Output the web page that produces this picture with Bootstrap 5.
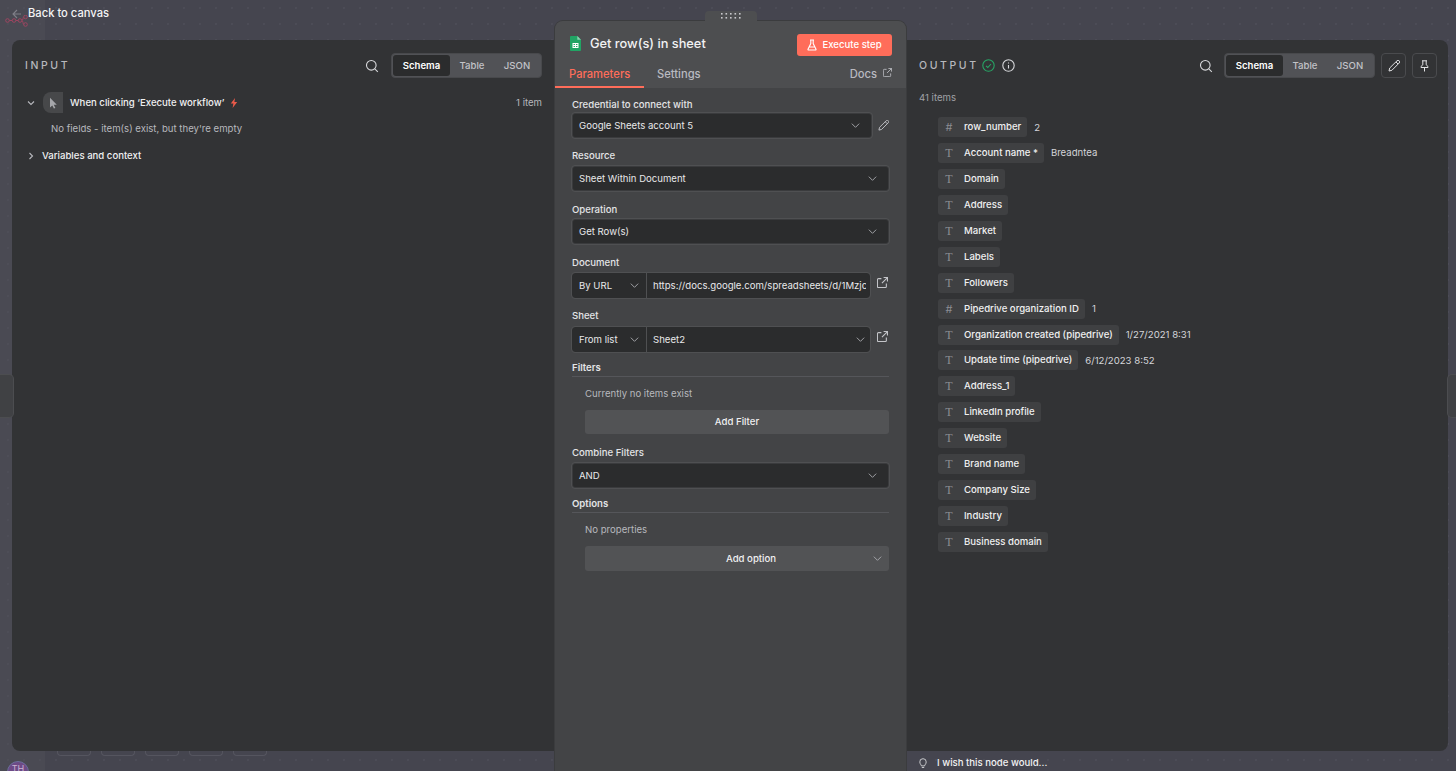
<!DOCTYPE html>
<html lang="en">
<head>
<meta charset="utf-8">
<title>Get row(s) in sheet</title>
<link href="https://cdn.jsdelivr.net/npm/bootstrap@5.3.0/dist/css/bootstrap.min.css" rel="stylesheet">
<style>
html,body{height:771px;overflow:hidden}
body{font-family:Inter,"Liberation Sans",sans-serif;font-size:9.6px;line-height:16px;color:#e4e4e6;
background:radial-gradient(circle,#4f4f59 0.6px,transparent 1px) 0 0/16px 16px,linear-gradient(90deg,#4a4a53 45px,#45454f 45px)}
svg{display:block;flex:none}
.stage{width:1456px;height:771px;position:relative}
.topbar{height:40px;padding:4px 0 0 5px;position:relative}
.back-arrow{position:absolute;left:11px;top:8px}
.n8n-logo{position:absolute;left:5px;top:15px}
.back-text{margin-left:23px;font-size:11.2px;font-weight:500;color:#f4f4f5;line-height:16px;padding-top:1px}
.workspace{height:711px;margin:0 8px 0 12px;background:#323335;border-radius:8px}
.side-left{width:543px;flex:none;padding:13px 13px 0 13px}
.side-right{flex:1;padding:13px 11px 0 13px}
.center-panel{width:351px;flex:none;height:750px;margin-top:-19px;background:#434446;border-radius:8px 8px 0 0;position:relative;box-shadow:0 0 0 1px #3b3c3e}
.grip{position:absolute;left:150px;top:-10px;width:52px;height:10px;background:#4d4e50;border-radius:4px 4px 0 0;display:flex;align-items:center;justify-content:center}
.panel-head{height:67px;background:#4d4e50;border-radius:8px 8px 0 0;position:relative}
.title-row{height:44px;padding:13px 14px 0 15px}
.node-title{font-size:12.8px;font-weight:500;color:#f2f2f3;margin-left:9px;line-height:18px;padding-top:1px}
.run-btn{width:95px;height:22px;background:#ff6d5a;color:#fff;border:0;border-radius:3px;font-size:9.6px;font-weight:500;padding:0}
.tabs-row{height:23px;padding:0 14px 0 0;font-size:11.2px;font-weight:500;color:#b9bac0;line-height:18px}
.tab-on{width:89px;height:23px;color:#ff6d5a;padding-left:14px;border-bottom:2px solid #ff6d5a}
.tab-off{margin-left:13px}
.form-body{padding:9px 17px 0 17px}
.lbl{font-size:9.6px;font-weight:500;color:#e4e4e6;line-height:16px;height:16px}
.field{height:25px;background:#2b2c2d;border:1px solid #3a3b3d;outline:1px solid #4f5052;border-radius:3px;padding:0 10px 0 6px;color:#e8e8ea}
.w-pick{width:300px}
.split-l{flex:none;width:74px;height:25px;background:#2b2c2d;border-radius:3px 0 0 3px;padding:0 6px 0 7px;outline:1px solid #4f5052;color:#e8e8ea}
.split-r{flex:none;width:223px;height:25px;margin-left:1px;background:#2b2c2d;border-radius:0 3px 3px 0;padding:0 4px 0 6px;outline:1px solid #4f5052;color:#e8e8ea;white-space:nowrap}
.url-clip{display:block;width:217px;overflow:hidden}
.sec-lbl{font-weight:600;color:#e4e4e6;height:16px;line-height:16px}
.sec-line{height:1px;background:#55565a}
.muted-note{padding-left:13px;color:#b7b8bd;line-height:16px}
.wide-btn{margin-left:13px;width:304px;height:24px;background:#525355;border:0;border-radius:3px;color:#f0f0f1;font-weight:500;font-size:9.6px;padding:0;position:relative}
.wide-btn svg{position:absolute;right:6px;top:7px}
.add-opt{height:25px;padding-left:28px}
.head-line{height:25px}
.caps{font-size:10.5px;letter-spacing:2.6px;color:#b7b8bd;font-weight:500;line-height:26px;height:25px}
.seg{height:25px;width:151px;background:#515256;border:1px solid #48494c;border-radius:4px;padding:1px;color:#c2c3c8;font-weight:500}
.seg-on{width:57px;height:21px;background:#2b2c2d;color:#fff;border-radius:3px;display:flex;align-items:center;justify-content:center;font-weight:600}
.seg-a{width:44px;text-align:center}
.seg-b{width:46px;text-align:center}
.tool-btn{width:25px;height:25px;border:1px solid #4a4b4e;border-radius:4px;display:flex;align-items:center;justify-content:center}
.node-row{height:21px;margin:14px 0 0 0}
.node-ico{width:20px;height:21px;background:#47484a;border-radius:8px 0 0 8px;display:flex;align-items:center;justify-content:center;margin-left:6px}
.strong-t{font-weight:500;color:#f0f0f1}
.dim{color:#b7b8bd}
.pill-list{display:flex;flex-direction:column;gap:5.94px;margin:11px 0 0 19px}
.pill-line{height:20px;display:flex;align-items:center}
.pill-x{height:20px;background:#3f4042;border-radius:3px;padding:0 6px;display:flex;align-items:center;color:#f0f0f1;font-weight:500}
.pill-ico{width:10px;text-align:center;margin-right:10px;color:#8c8d92;font-family:"Liberation Serif",serif;font-size:12px;line-height:20px}
.pill-ico-h{font-family:Inter,sans-serif;font-weight:400;font-size:11px}
.pill-val{margin-left:7px;color:#d4d5d9;padding-top:1px}
.handle{position:absolute;top:374px;width:14px;height:44px;background:#404144;border:1px solid #4c4d50}
.handle-l{left:0;border-left:0;border-radius:0 5px 5px 0}
.handle-r{right:0;width:9px;border-right:0;border-radius:5px 0 0 5px}
.foot-strip{height:20px;position:relative}
.mini-slot{position:absolute;top:0;height:5px;width:34px;border:1px solid #55555f;border-top:0;border-radius:0 0 4px 4px}
.avatar{position:absolute;left:7px;top:10px;width:22px;height:22px;border-radius:50%;background:#6d4a86;color:#c9b3d2;font-size:9px;text-align:center;line-height:14px;border:1px solid #6b6f9c}
.wish{position:absolute;left:919px;top:4px;display:flex;align-items:center;color:#f2f2f3;font-weight:500}
.wish span{margin-left:10px;font-size:9.6px}
</style>
</head>
<body>
<div class="stage">
  <div class="topbar">
    <svg class="back-arrow" width="12" height="12" viewBox="0 0 12 12" fill="none" stroke="#7f7f88" stroke-width="1.1"><path d="M10 6H2M6 2 2 6l4 4"/></svg>
    <svg class="n8n-logo" width="23" height="12" viewBox="0 0 23 12" fill="none" stroke="#9c4560" stroke-width="1"><circle cx="2.5" cy="5.5" r="1.8"/><circle cx="9" cy="5.5" r="1.8"/><circle cx="15" cy="5.5" r="1.8"/><circle cx="20.5" cy="2" r="1.8"/><circle cx="20.5" cy="9.5" r="1.8"/><path d="M4.3 5.5h2.9M10.8 5.5h2.4M16.800 5.500c1.500 0 1-3.500 1.900-3.500M16.800 5.500c1.500 0 1 4 1.900 4"/></svg>
    <div class="back-text">Back to canvas</div>
  </div>

  <div class="workspace d-flex">
    <section class="side-left">
      <div class="head-line d-flex align-items-center">
        <span class="caps">INPUT</span>
        <svg class="ms-auto" style="margin-right:12px" width="14" height="14" viewBox="0 0 14 14" fill="none" stroke="#d8d9dc" stroke-width="1.1"><circle cx="6.3" cy="6.3" r="4.8"/><path d="m9.8 9.8 3 3"/></svg>
        <div class="seg d-flex align-items-center"><div class="seg-on">Schema</div><div class="seg-a">Table</div><div class="seg-b">JSON</div></div>
      </div>
      <div class="node-row d-flex align-items-center">
        <svg width="12" height="12" viewBox="0 0 12 12" fill="none" stroke="#b7b8bd" stroke-width="1.1"><path d="m3 4.5 3 3 3-3"/></svg>
        <div class="node-ico"><svg width="10" height="12" viewBox="0 0 10 12" fill="#a5a6aa"><path d="M2 .8v9.600l2.300-2 1.600 3.200 1.500-.7-1.600-3.100h3z"/></svg></div>
        <span class="strong-t" style="margin-left:7px">When clicking ‘Execute workflow’</span>
        <svg style="margin-left:6px" width="8" height="10" viewBox="0 0 8 10" fill="#ea5a4a"><path d="M5 0 .8 5.600h2.600L2.600 10l4.600-6H4.400z"/></svg>
        <span class="dim ms-auto">1 item</span>
      </div>
      <div class="dim" style="margin:8px 0 0 26px">No fields - item(s) exist, but they're empty</div>
      <div class="d-flex align-items-center" style="margin-top:11px">
        <svg width="12" height="12" viewBox="0 0 12 12" fill="none" stroke="#b7b8bd" stroke-width="1.1"><path d="m4.500 3 3 3-3 3"/></svg>
        <span class="strong-t" style="margin-left:5px">Variables and context</span>
      </div>
    </section>

    <section class="center-panel">
      <div class="grip"><svg width="22" height="6" viewBox="0 0 22 6" fill="#c8c8cc"><rect x="1" y="0" width="1.6" height="1.6"/><rect x="1" y="4" width="1.6" height="1.6"/><rect x="5.5" y="0" width="1.6" height="1.6"/><rect x="5.5" y="4" width="1.6" height="1.6"/><rect x="10" y="0" width="1.6" height="1.6"/><rect x="10" y="4" width="1.6" height="1.6"/><rect x="14.5" y="0" width="1.6" height="1.6"/><rect x="14.5" y="4" width="1.6" height="1.6"/><rect x="19" y="0" width="1.6" height="1.6"/><rect x="19" y="4" width="1.6" height="1.6"/></svg></div>
      <div class="panel-head">
        <div class="title-row d-flex align-items-start">
          <svg style="margin-top:2px" width="11" height="15" viewBox="0 0 11 15"><path fill="#21a464" d="M1 0h6.300L11 3.700V14a1 1 0 0 1-1 1H1a1 1 0 0 1-1-1V1a1 1 0 0 1 1-1z"/><path fill="#8ed1b1" d="M7.300 0 11 3.700H7.300z"/><path fill="#fff" d="M2.500 7h6v5h-6z"/><path fill="#21a464" d="M3.600 8h1.300v1H3.600zM6 8h1.400v1H6zM3.600 10h1.300v1H3.600zM6 10h1.400v1H6z"/></svg>
          <span class="node-title">Get row(s) in sheet</span>
          <button class="run-btn ms-auto d-flex align-items-center justify-content-center" type="button">
            <svg style="margin-right:5px" width="10" height="12" viewBox="0 0 10 12" fill="none" stroke="#fff" stroke-width="1.1"><path d="M3 1h4M3.800 1v3.500L1 10.200c-.2.500.1.800.6.800h6.800c.5 0 .8-.3.6-.8L6.200 4.500V1M2.400 8h5.200"/></svg>Execute step</button>
        </div>
        <div class="tabs-row d-flex align-items-start">
          <div class="tab-on">Parameters</div>
          <div class="tab-off">Settings</div>
          <div class="ms-auto d-flex align-items-center"><span>Docs</span><svg style="margin:-3px 0 0 6px" width="9" height="9" viewBox="0 0 10 10" fill="none" stroke="#b9bac0" stroke-width="1"><path d="M8.500 6v2.600a1 1 0 0 1-1 1H1.400a1 1 0 0 1-1-1V2.500a1 1 0 0 1 1-1H4M6 .5h3.500V4M9.500.5 4.500 5.500"/></svg></div>
        </div>
      </div>

      <div class="form-body">
        <div class="lbl">Credential to connect with</div>
        <div class="d-flex align-items-center">
          <div class="field w-pick d-flex align-items-center">Google Sheets account 5<svg class="ms-auto" width="11" height="11" viewBox="0 0 12 12" fill="none" stroke="#a9aaae" stroke-width="1"><path d="m2 4 4 4 4-4"/></svg></div>
          <svg style="margin-left:6px" width="11" height="11" viewBox="0 0 12 12" fill="none" stroke="#c4c5c9" stroke-width="1"><path d="M1 11l.7-3L9 .8a1.200 1.200 0 0 1 2.200 2.200L3.900 10.300zM8 2l2 2"/></svg>
        </div>

        <div class="lbl" style="margin-top:10px">Resource</div>
        <div class="field d-flex align-items-center" style="margin-top:2px">Sheet Within Document<svg class="ms-auto" width="11" height="11" viewBox="0 0 12 12" fill="none" stroke="#a9aaae" stroke-width="1"><path d="m2 4 4 4 4-4"/></svg></div>

        <div class="lbl" style="margin-top:11px">Operation</div>
        <div class="field d-flex align-items-center" style="margin-top:1px">Get Row(s)<svg class="ms-auto" width="11" height="11" viewBox="0 0 12 12" fill="none" stroke="#a9aaae" stroke-width="1"><path d="m2 4 4 4 4-4"/></svg></div>

        <div class="lbl" style="margin-top:11px">Document</div>
        <div class="d-flex align-items-center" style="margin-top:2px">
          <div class="split-l d-flex align-items-center">By URL<svg class="ms-auto" width="11" height="11" viewBox="0 0 12 12" fill="none" stroke="#a9aaae" stroke-width="1"><path d="m2 4 4 4 4-4"/></svg></div>
          <div class="split-r d-flex align-items-center"><span class="url-clip">https://docs.google.com/spreadsheets/d/1Mzjc8xLq2vT0aPw</span></div>
          <svg style="margin:-6px 0 0 7px" width="11" height="11" viewBox="0 0 10 10" fill="none" stroke="#c4c5c9" stroke-width="1"><path d="M8.500 6v2.600a1 1 0 0 1-1 1H1.400a1 1 0 0 1-1-1V2.500a1 1 0 0 1 1-1H4M6 .5h3.500V4M9.500.5 4.500 5.500"/></svg>
        </div>

        <div class="lbl" style="margin-top:10px">Sheet</div>
        <div class="d-flex align-items-center" style="margin-top:3px">
          <div class="split-l d-flex align-items-center">From list<svg class="ms-auto" width="11" height="11" viewBox="0 0 12 12" fill="none" stroke="#a9aaae" stroke-width="1"><path d="m2 4 4 4 4-4"/></svg></div>
          <div class="split-r d-flex align-items-center">Sheet2<svg class="ms-auto" width="11" height="11" viewBox="0 0 12 12" fill="none" stroke="#a9aaae" stroke-width="1"><path d="m2 4 4 4 4-4"/></svg></div>
          <svg style="margin:-6px 0 0 7px" width="11" height="11" viewBox="0 0 10 10" fill="none" stroke="#c4c5c9" stroke-width="1"><path d="M8.500 6v2.600a1 1 0 0 1-1 1H1.400a1 1 0 0 1-1-1V2.500a1 1 0 0 1 1-1H4M6 .5h3.500V4M9.500.5 4.500 5.500"/></svg>
        </div>

        <div class="sec-lbl" style="margin-top:8px">Filters</div>
        <div class="sec-line"></div>
        <div class="muted-note" style="margin-top:9px">Currently no items exist</div>
        <button class="wide-btn d-block" type="button" style="margin-top:8px">Add Filter</button>

        <div class="lbl" style="margin-top:11px">Combine Filters</div>
        <div class="field d-flex align-items-center" style="margin-top:2px">AND<svg class="ms-auto" width="11" height="11" viewBox="0 0 12 12" fill="none" stroke="#a9aaae" stroke-width="1"><path d="m2 4 4 4 4-4"/></svg></div>

        <div class="sec-lbl" style="margin-top:8px">Options</div>
        <div class="sec-line"></div>
        <div class="muted-note" style="margin-top:9px">No properties</div>
        <button class="wide-btn add-opt d-block" type="button" style="margin-top:8px">Add option<svg width="11" height="11" viewBox="0 0 12 12" fill="none" stroke="#a9aaae" stroke-width="1"><path d="m2 4 4 4 4-4"/></svg></button>
      </div>
    </section>

    <section class="side-right">
      <div class="head-line d-flex align-items-center">
        <span class="caps">OUTPUT</span>
        <svg style="margin-left:3px" width="13" height="13" viewBox="0 0 13 13" fill="none" stroke="#27a565" stroke-width="1.1"><circle cx="6.500" cy="6.500" r="5.700"/><path d="m4 6.800 1.800 1.700L9 5"/></svg>
        <svg style="margin-left:7px" width="13" height="13" viewBox="0 0 13 13" fill="none" stroke="#d8d9dc" stroke-width="1.1"><circle cx="6.500" cy="6.500" r="5.700"/><path d="M6.500 6v3.500M6.500 3.500v1"/></svg>
        <svg class="ms-auto" style="margin-right:11px" width="14" height="14" viewBox="0 0 14 14" fill="none" stroke="#d8d9dc" stroke-width="1.1"><circle cx="6.300" cy="6.300" r="4.800"/><path d="m9.800 9.800 3 3"/></svg>
        <div class="seg d-flex align-items-center"><div class="seg-on">Schema</div><div class="seg-a">Table</div><div class="seg-b">JSON</div></div>
        <div class="tool-btn" style="margin-left:6px"><svg width="12" height="12" viewBox="0 0 12 12" fill="none" stroke="#e2e2e4" stroke-width="1"><path d="M1 11l.7-3L9 .8a1.200 1.200 0 0 1 2.200 2.200L3.900 10.300zM8 2l2 2"/></svg></div>
        <div class="tool-btn" style="margin-left:6px"><svg width="11" height="12" viewBox="0 0 11 12" fill="none" stroke="#e2e2e4" stroke-width="1"><path d="M3 .8h5M3.800.8v4L2 6.500v1h7v-1L7.200 4.800v-4M5.500 7.500V11.500"/></svg></div>
      </div>
      <div class="dim" style="margin-top:12px;color:#a0a1a6">41 items</div>
      <div class="pill-list">
        <div class="pill-line"><div class="pill-x"><span class="pill-ico pill-ico-h">#</span>row_number</div><span class="pill-val">2</span></div>
        <div class="pill-line"><div class="pill-x"><span class="pill-ico">T</span>Account name *</div><span class="pill-val">Breadntea</span></div>
        <div class="pill-line"><div class="pill-x"><span class="pill-ico">T</span>Domain</div></div>
        <div class="pill-line"><div class="pill-x"><span class="pill-ico">T</span>Address</div></div>
        <div class="pill-line"><div class="pill-x"><span class="pill-ico">T</span>Market</div></div>
        <div class="pill-line"><div class="pill-x"><span class="pill-ico">T</span>Labels</div></div>
        <div class="pill-line"><div class="pill-x"><span class="pill-ico">T</span>Followers</div></div>
        <div class="pill-line"><div class="pill-x"><span class="pill-ico pill-ico-h">#</span>Pipedrive organization ID</div><span class="pill-val">1</span></div>
        <div class="pill-line"><div class="pill-x"><span class="pill-ico">T</span>Organization created (pipedrive)</div><span class="pill-val">1/27/2021 8:31</span></div>
        <div class="pill-line"><div class="pill-x"><span class="pill-ico">T</span>Update time (pipedrive)</div><span class="pill-val">6/12/2023 8:52</span></div>
        <div class="pill-line"><div class="pill-x"><span class="pill-ico">T</span>Address_1</div></div>
        <div class="pill-line"><div class="pill-x"><span class="pill-ico">T</span>LinkedIn profile</div></div>
        <div class="pill-line"><div class="pill-x"><span class="pill-ico">T</span>Website</div></div>
        <div class="pill-line"><div class="pill-x"><span class="pill-ico">T</span>Brand name</div></div>
        <div class="pill-line"><div class="pill-x"><span class="pill-ico">T</span>Company Size</div></div>
        <div class="pill-line"><div class="pill-x"><span class="pill-ico">T</span>Industry</div></div>
        <div class="pill-line"><div class="pill-x"><span class="pill-ico">T</span>Business domain</div></div>
      </div>
    </section>
  </div>

  <div class="foot-strip">
    <div class="mini-slot" style="left:57px"></div>
    <div class="mini-slot" style="left:101px"></div>
    <div class="mini-slot" style="left:145px"></div>
    <div class="mini-slot" style="left:189px"></div>
    <div class="mini-slot" style="left:233px"></div>
    <div class="avatar">TH</div>
    <div class="wish">
      <svg width="8" height="11" viewBox="0 0 10 13" fill="none" stroke="#d8d9dc" stroke-width="1.1"><path d="M3 9.500c0-1.500-2-2.300-2-5a4 4 0 0 1 8 0c0 2.700-2 3.500-2 5zM3.500 11.500h3"/></svg>
      <span>I wish this node would...</span>
    </div>
  </div>

  <div class="handle handle-l"></div>
  <div class="handle handle-r"></div>
</div>
<script src="https://cdn.jsdelivr.net/npm/bootstrap@5.3.0/dist/js/bootstrap.bundle.min.js"></script>
</body>
</html>
